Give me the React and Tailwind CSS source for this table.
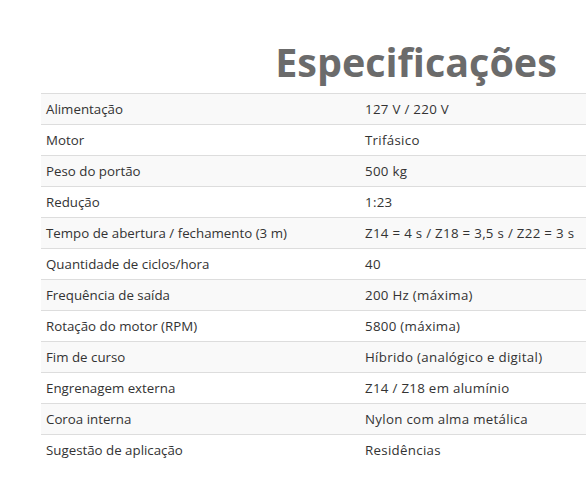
export default function App() {
  const rows = [
    ["Alimentação", "127 V / 220 V"],
    ["Motor", "Trifásico"],
    ["Peso do portão", "500 kg"],
    ["Redução", "1:23"],
    ["Tempo de abertura / fechamento (3 m)", "Z14 = 4 s / Z18 = 3,5 s / Z22 = 3 s"],
    ["Quantidade de ciclos/hora", "40"],
    ["Frequência de saída", "200 Hz (máxima)"],
    ["Rotação do motor (RPM)", "5800 (máxima)"],
    ["Fim de curso", "Híbrido (analógico e digital)"],
    ["Engrenagem externa", "Z14 / Z18 em alumínio"],
    ["Coroa interna", "Nylon com alma metálica"],
    ["Sugestão de aplicação", "Residências"],
  ];
  return (
    <div className="w-[586px] h-[504px] overflow-hidden bg-white" style={{ fontFamily: '"Open Sans", sans-serif' }}>
      <div className="w-[750px] ml-[41px]">
        <h1 className="text-center font-bold text-[39.5px] leading-[48px] text-[#6b6b6b] pt-[38px] pb-[7px]">Especificações</h1>
        <div>
          {rows.map(([a, b], i) => (
            <div key={i} className={`flex h-[31px] items-center pt-[2px] text-[13.3px] text-[#333333] border-t border-[#dddddd] ${i % 2 === 0 ? "bg-[#f9f9f9]" : "bg-white"}`}>
              <div className="w-[319px] pl-[5px]">{a}</div>
              <div className="pl-[5px] tracking-[0.3px]">{b}</div>
            </div>
          ))}
        </div>
      </div>
    </div>
  );
}
